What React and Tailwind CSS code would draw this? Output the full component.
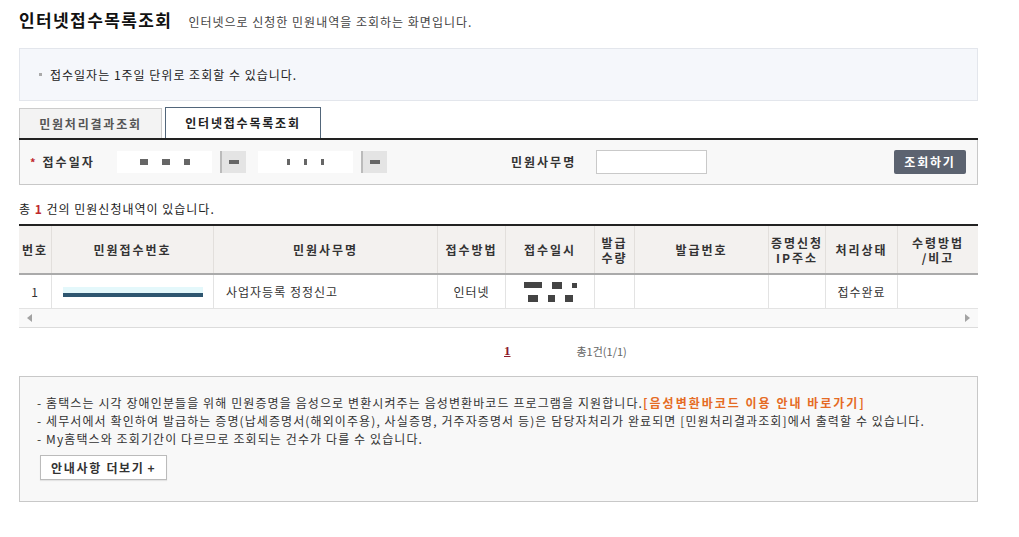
import React from 'react';

const cols = [
  { label: '번호', w: 'w-[33px]' },
  { label: '민원접수번호', w: 'w-[162px]' },
  { label: '민원사무명', w: 'w-[224px]' },
  { label: '접수방법', w: 'w-[68px]' },
  { label: '접수일시', w: 'w-[89px]' },
  { label: ['발급', '수량'], w: 'w-[40px]' },
  { label: '발급번호', w: 'w-[134px]' },
  { label: ['증명신청', 'IP주소'], w: 'w-[57px]' },
  { label: '처리상태', w: 'w-[72px]' },
  { label: ['수령방법', '/비고'], w: 'w-[80px]' },
];

function Blocks({ items }) {
  return (
    <div className="flex items-center gap-[14px]">
      {items.map((w, i) => (
        <span key={i} className="h-[6px] bg-[#555] opacity-90" style={{ width: w }} />
      ))}
    </div>
  );
}

function DateField({ dots }) {
  return (
    <div className="flex items-center">
      <div className="w-[95px] h-[22px] bg-white flex items-center justify-center">
        <Blocks items={dots} />
      </div>
      <div className="w-[26px] h-[22px] ml-[8px] bg-[#e4e4e4] border-l-2 border-[#bbb] flex items-center justify-center">
        <span className="w-[10px] h-[4px] bg-[#666]" />
      </div>
    </div>
  );
}

export default function App() {
  return (
    <div className="w-[1019px] h-[537px] bg-white text-[#333] font-['Noto_Sans_CJK_KR','Noto_Sans',sans-serif] overflow-hidden">
      <div className="pl-[19px] pr-[41px] pt-[7px]">
        <div className="flex items-baseline gap-[16px] h-[26px]">
          <h1 className="text-[17px] font-bold text-[#111] leading-[26px] tracking-[1.4px]">인터넷접수목록조회</h1>
          <p className="text-[12px] text-[#444] leading-[26px] tracking-[1px]">인터넷으로 신청한 민원내역을 조회하는 화면입니다.</p>
        </div>

        <div className="mt-[15px] h-[53px] bg-[#f5f7fb] border border-[#e3e6ec] flex items-center pl-[19px]">
          <span className="w-[3px] h-[3px] bg-[#aaa] mr-[8px]" />
          <span className="text-[12px] text-[#222] leading-[16px] tracking-[1px]">접수일자는 1주일 단위로 조회할 수 있습니다.</span>
        </div>

        <div className="mt-[6px] flex items-end h-[33px] border-b-2 border-[#222]">
          <div className="w-[143px] h-[30px] bg-[#f3f3f3] border border-b-0 border-[#ccc] flex items-center justify-center text-[12px] font-bold text-[#555] tracking-[1.8px]">
            민원처리결과조회
          </div>
          <div className="ml-[3px] w-[156px] h-[31px] bg-white border border-b-0 border-[#52667a] flex items-center justify-center text-[12px] font-bold text-[#222] tracking-[1.8px]">
            인터넷접수목록조회
          </div>
        </div>

        <div className="h-[45px] bg-[#f8f8f8] border-b border-l border-r border-[#c8c8c8] flex items-center">
          <div className="pl-[10px] w-[97px] flex items-center text-[12px] font-bold text-[#333] tracking-[2px]">
            <span className="text-[#c0282d] mr-[5px] text-[11px]">*</span>접수일자
          </div>
          <DateField dots={['8px', '8px', '6px']} />
          <div className="ml-[12px]">
            <DateField dots={['3px', '3px', '3px']} />
          </div>
          <div className="ml-[124px] text-[12px] font-bold text-[#333] tracking-[2px]">민원사무명</div>
          <div className="ml-[20px] w-[111px] h-[24px] bg-white border border-[#c9c9c9]" />
          <div className="ml-auto mr-[11px] w-[72px] h-[24px] rounded-[2px] bg-[#5c6370] flex items-center justify-center text-[12px] font-bold text-white tracking-[1.8px]">
            조회하기
          </div>
        </div>

        <div className="mt-[16px] text-[12px] text-[#222] leading-[16px] tracking-[1px]">
          총 <span className="text-[#c0282d] font-bold">1</span> 건의 민원신청내역이 있습니다.
        </div>

        <div className="mt-[7px] border-t-2 border-[#222]">
          <div className="flex h-[49px] bg-[#f3f1ef] border-b-2 border-[#aaa]">
            {cols.map((c, i) => (
              <div
                key={i}
                className={`${c.w} shrink-0 flex flex-col items-center justify-center text-[12px] font-bold text-[#333] leading-[15px] tracking-[2px] ${i < cols.length - 1 ? 'border-r border-[#e2dfdc]' : ''}`}
              >
                {Array.isArray(c.label) ? c.label.map((l) => <span key={l}>{l}</span>) : c.label}
              </div>
            ))}
          </div>
          <div className="flex h-[34px] text-[12px] text-[#333] border-b border-[#e3e3e3] tracking-[1px]">
            <div className="w-[33px] shrink-0 border-r border-[#e3e3e3] flex items-center justify-center">1</div>
            <div className="w-[162px] shrink-0 border-r border-[#e3e3e3] flex items-center justify-center">
              <div className="w-[140px] flex flex-col">
                <div className="h-[6px] bg-[#e4f8fb]" />
                <div className="h-[4px] bg-[#2e5670]" />
              </div>
            </div>
            <div className="w-[224px] shrink-0 border-r border-[#e3e3e3] flex items-center pl-[12px]">사업자등록 정정신고</div>
            <div className="w-[68px] shrink-0 border-r border-[#e3e3e3] flex items-center justify-center">인터넷</div>
            <div className="w-[89px] shrink-0 border-r border-[#e3e3e3] flex flex-col items-center justify-center gap-[6px]">
              <div className="flex items-center gap-[10px]">
                <span className="w-[18px] h-[6px] bg-[#444]" />
                <span className="w-[10px] h-[7px] bg-[#444]" />
                <span className="w-[5px] h-[5px] bg-[#444]" />
              </div>
              <div className="flex items-center gap-[10px]">
                <span className="w-[10px] h-[7px] bg-[#444]" />
                <span className="w-[7px] h-[7px] bg-[#444]" />
                <span className="w-[8px] h-[7px] bg-[#444]" />
              </div>
            </div>
            <div className="w-[40px] shrink-0 border-r border-[#e3e3e3]" />
            <div className="w-[134px] shrink-0 border-r border-[#e3e3e3]" />
            <div className="w-[57px] shrink-0 border-r border-[#e3e3e3]" />
            <div className="w-[72px] shrink-0 border-r border-[#e3e3e3] flex items-center justify-center">접수완료</div>
            <div className="w-[80px] shrink-0" />
          </div>
          <div className="h-[19px] bg-[#f9f9f9] border-b border-[#dcdcdc] flex items-center justify-between px-[8px]">
            <span className="w-0 h-0 border-y-[4px] border-y-transparent border-r-[5px] border-r-[#a3a3a3]" />
            <span className="w-0 h-0 border-y-[4px] border-y-transparent border-l-[5px] border-l-[#a3a3a3]" />
          </div>
        </div>

        <div className="mt-[13px] h-[20px] flex items-center">
          <span className="ml-[485px] text-[13px] font-bold text-[#8b1a2b] underline font-['Liberation_Serif',serif]">1</span>
          <span className="ml-[66px] text-[11px] text-[#666]">총1건(1/1)</span>
        </div>

        <div className="mt-[15px] h-[126px] bg-[#f8f8f8] border border-[#c8c8c8] pl-[17px] pt-[17px]">
          <div className="text-[12px] text-[#333] leading-[18px] tracking-[1.1px]">
            <p>
              - 홈택스는 시각 장애인분들을 위해 민원증명을 음성으로 변환시켜주는 음성변환바코드 프로그램을 지원합니다.
              <span className="text-[#e56b24] font-bold tracking-[2px]">[음성변환바코드 이용 안내 바로가기]</span>
            </p>
            <p>- 세무서에서 확인하여 발급하는 증명(납세증명서(해외이주용), 사실증명, 거주자증명서 등)은 담당자처리가 완료되면 [민원처리결과조회]에서 출력할 수 있습니다.</p>
            <p>- My홈택스와 조회기간이 다르므로 조회되는 건수가 다를 수 있습니다.</p>
          </div>
          <div className="mt-[7px] ml-[3px] inline-flex items-center h-[25px] px-[10px] bg-white border border-[#bbb] text-[12px] font-bold text-[#333] tracking-[1.7px] shadow-[0_1px_1px_rgba(0,0,0,0.08)]">
            안내사항 더보기 <span className="ml-[3px]">+</span>
          </div>
        </div>
      </div>
    </div>
  );
}
